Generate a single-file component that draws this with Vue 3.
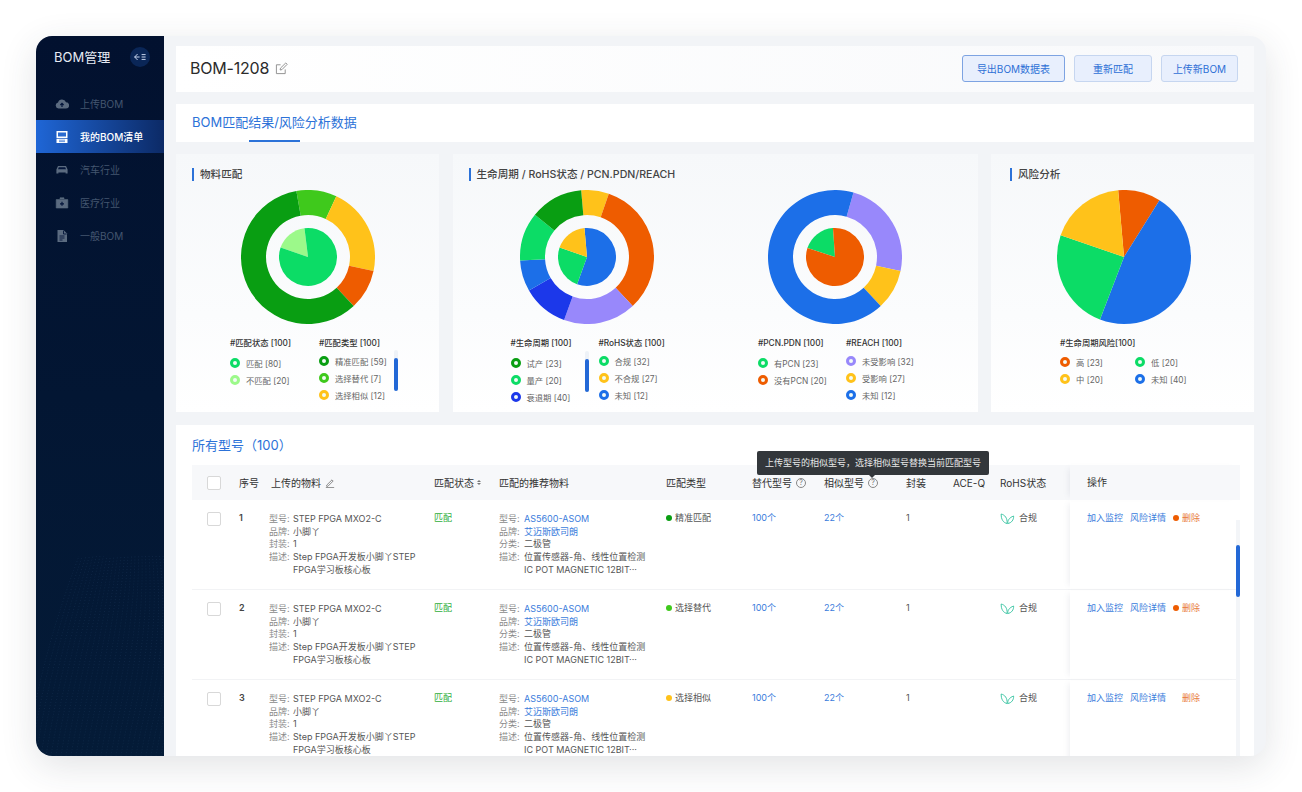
<script setup>
const menu = [
  { name: '上传BOM', icon: 'cloud' },
  { name: '我的BOM清单', icon: 'list', active: true },
  { name: '汽车行业', icon: 'car' },
  { name: '医疗行业', icon: 'kit' },
  { name: '一般BOM', icon: 'doc' }
];

const c = {
  dark: '#099e12',
  lime: '#3fc91c',
  yellow: '#ffc21a',
  orange: '#ee5c00',
  green: '#0cdc66',
  pale: '#9cf98a',
  blue: '#1c6fe8',
  deep: '#1c38ea',
  purple: '#9888fb'
};

// angles run clockwise from 12 o'clock
function slice(r0, r1, a0, a1) {
  const pt = (r, a) => {
    const t = ((a - 90) * Math.PI) / 180;
    return `${(67 + r * Math.cos(t)).toFixed(2)} ${(67 + r * Math.sin(t)).toFixed(2)}`;
  };
  const large = a1 - a0 > 180 ? 1 : 0;
  if (r0 === 0) {
    return `M67 67L${pt(r1, a0)}A${r1} ${r1} 0 ${large} 1 ${pt(r1, a1)}Z`;
  }
  return `M${pt(r1, a0)}A${r1} ${r1} 0 ${large} 1 ${pt(r1, a1)}L${pt(r0, a1)}A${r0} ${r0} 0 ${large} 0 ${pt(r0, a0)}Z`;
}

function ring(r0, r1, start, parts) {
  let from = start;
  return parts.map(([color, to]) => {
    const d = slice(r0, r1, from, to);
    from = to;
    return { color, d };
  });
}

const donut = (outer, inner) => [...ring(42, 67, outer[0], outer[1]), ...ring(0, 29, inner[0], inner[1])];

const panels = [
  {
    title: '物料匹配',
    cls: 'panel-a',
    charts: [
      {
        legend: 'legend-a',
        slices: donut(
          [-10, [[c.lime, 25], [c.yellow, 102], [c.orange, 137], [c.dark, 350]]],
          [-71, [[c.pale, -7], [c.green, 289]]]
        ),
        cols: [
          { head: '#匹配状态 [100]', items: [[c.green, '匹配 [80]'], [c.pale, '不匹配 [20]']] },
          { head: '#匹配类型 [100]', bar: true, items: [[c.dark, '精准匹配 [59]'], [c.lime, '选择替代 [7]'], [c.yellow, '选择相似 [12]']] }
        ]
      }
    ]
  },
  {
    title: '生命周期 / RoHS状态 / PCN.PDN/REACH',
    cls: 'panel-b',
    charts: [
      {
        legend: 'legend-b',
        slices: donut(
          [-5, [[c.yellow, 19], [c.orange, 137], [c.purple, 200], [c.deep, 240], [c.blue, 267], [c.green, 309], [c.dark, 355]]],
          [-5, [[c.blue, 200], [c.green, 289], [c.yellow, 355]]]
        ),
        leftBar: true,
        cols: [
          { head: '#生命周期 [100]', items: [[c.dark, '试产 [23]'], [c.green, '量产 [20]'], [c.deep, '衰退期 [40]']] },
          { head: '#RoHS状态 [100]', items: [[c.green, '合规 [32]'], [c.yellow, '不合规 [27]'], [c.blue, '未知 [12]']] }
        ]
      },
      {
        legend: 'legend-b',
        slices: donut(
          [16, [[c.purple, 102], [c.yellow, 137], [c.blue, 376]]],
          [-72, [[c.green, -4], [c.orange, 288]]]
        ),
        cols: [
          { head: '#PCN.PDN [100]', items: [[c.green, '有PCN [23]'], [c.orange, '没有PCN [20]']] },
          { head: '#REACH [100]', items: [[c.purple, '未受影响 [32]'], [c.yellow, '受影响 [27]'], [c.blue, '未知 [12]']] }
        ]
      }
    ]
  },
  {
    title: '风险分析',
    cls: 'panel-c',
    charts: [
      {
        legend: 'legend-c',
        slices: ring(0, 67, -5, [[c.orange, 32], [c.blue, 201], [c.green, 289], [c.yellow, 355]]),
        head: '#生命周期风险[100]',
        cols: [
          { items: [[c.orange, '高 [23]'], [c.yellow, '中 [20]']] },
          { items: [[c.green, '低 [20]'], [c.blue, '未知 [40]']] }
        ]
      }
    ]
  }
];

const rows = [
  { no: 1, dot: c.dark, type: '精准匹配', risk: true },
  { no: 2, dot: c.lime, type: '选择替代', risk: true },
  { no: 3, dot: c.yellow, type: '选择相似', risk: false }
];

// dotted contour lines at the foot of the sidebar
const waves = Array.from({ length: 30 }, (_, i) => {
  const x = i * 5 - 10;
  return `M${x} 200C${x + 8} 150 ${x * 1.1 + 20} 90 ${x * 0.7 + 50} 0`;
});
</script>

<template>
  <div class="page">
    <div class="window">
      <aside class="side">
        <svg class="waves" viewBox="0 0 128 200" width="128" height="200">
          <path v-for="(w, i) in waves" :key="i" :d="w" />
        </svg>
        <div class="brand">
          <span>BOM管理</span>
          <span class="fold">
            <svg viewBox="0 0 14 14" width="14" height="14" fill="none" stroke="#dce8ff" stroke-width=".9">
              <path d="M4.6 4 1.6 7l3 3M1.6 7h5M8.6 4.6h4M8.6 7h4M8.6 9.4h4" />
            </svg>
          </span>
        </div>
        <nav class="menu">
          <div v-for="m in menu" :key="m.name" class="menu-item" :class="{ active: m.active }">
            <svg viewBox="0 0 14 14" width="14" height="14" class="menu-icon">
              <template v-if="m.icon === 'cloud'">
                <path d="M3.5 11.5a3 3 0 0 1-.5-5.9 4.2 4.2 0 0 1 8-.3 3.1 3.1 0 0 1 0 6.2z" fill="currentColor" />
                <path d="M7 10V6.5M5.4 8 7 6.4 8.6 8" fill="none" stroke="#03153a" stroke-width="1.2" />
              </template>
              <template v-else-if="m.icon === 'list'">
                <path d="M1.5 1h11v7h-11z" fill="currentColor" />
                <path d="M3 2.6h8v3.8H3z" fill="#2a6bd0" />
                <path d="M1.5 8.8h11V13h-11z" fill="#fff" />
                <path d="M4 10.2h6M4 11.6h6" stroke="#2a6bd0" stroke-width=".7" />
              </template>
              <template v-else-if="m.icon === 'car'">
                <path d="M3 3h8l1.6 3.4v4.2h-2V9.6H3.4v1h-2V6.4z" fill="currentColor" />
                <path d="M3.8 4.2h6.4l.8 2H3z" fill="#03153a" />
              </template>
              <template v-else-if="m.icon === 'kit'">
                <path d="M5 3V1.8h4V3M1.2 3.6h11.6v8.4H1.2z" fill="currentColor" stroke="currentColor" stroke-width=".6" />
                <path d="M7 5.8v4M5 7.8h4" stroke="#03153a" stroke-width="1.2" />
              </template>
              <template v-else>
                <path d="M2.5 1h6l3.5 3.5V13H2.5z" fill="currentColor" />
                <path d="M4.5 7h5M4.5 9h5M4.5 11h3M8.5 1.6V5H11.6" fill="none" stroke="#03153a" stroke-width=".9" />
              </template>
            </svg>
            <span>{{ m.name }}</span>
          </div>
        </nav>
      </aside>

      <main class="main">
        <header class="topbar">
          <div class="bom-name">
            <span>BOM-1208</span>
            <svg viewBox="0 0 14 14" width="13" height="13" fill="none" stroke="#8d8d8d" stroke-width="1">
              <path d="M11 8v4.5H1.5V3H6M5.5 8.6l.4-2L11.6 1l1.5 1.5-5.6 5.7z" />
            </svg>
          </div>
          <div class="actions">
            <button class="btn primary">导出BOM数据表</button>
            <button class="btn">重新匹配</button>
            <button class="btn last">上传新BOM</button>
          </div>
        </header>

        <div class="tabs">
          <span>BOM匹配结果/风险分析数据</span>
          <i class="tab-line"></i>
        </div>

        <section class="panels">
          <div v-for="p in panels" :key="p.title" class="panel" :class="p.cls">
            <h3 class="panel-title">{{ p.title }}</h3>
            <div class="chart-row">
              <div v-for="(ch, ci) in p.charts" :key="ci" class="chart-col">
                <svg class="chart" viewBox="0 0 134 134" width="134" height="134">
                  <path v-for="(s, si) in ch.slices" :key="si" :d="s.d" :fill="s.color" />
                </svg>
                <div class="legend" :class="ch.legend">
                  <div v-if="ch.head" class="legend-head wide">{{ ch.head }}</div>
                  <div class="legend-cols">
                    <div v-for="(col, li) in ch.cols" :key="li" class="legend-col">
                      <div v-if="col.head" class="legend-head">{{ col.head }}</div>
                      <div v-for="it in col.items" :key="it[1]" class="legend-item">
                        <i class="ring" :style="{ borderColor: it[0] }"></i>
                        <span>{{ it[1] }}</span>
                      </div>
                      <div v-if="col.bar" class="mini-bar right"><i></i></div>
                    </div>
                  </div>
                  <div v-if="ch.leftBar" class="mini-bar mid"><i></i></div>
                </div>
              </div>
            </div>
          </div>
        </section>

        <section class="table-card">
          <h2 class="table-title">所有型号（100）</h2>
          <div class="tip">上传型号的相似型号，选择相似型号替换当前匹配型号</div>
          <div class="grid head">
            <div class="cell-check"><i class="check"></i></div>
            <div>序号</div>
            <div class="upload-head">
              上传的物料
              <svg viewBox="0 0 12 12" width="10" height="10" fill="none" stroke="#777" stroke-width="1">
                <path d="M2 8.6 8.4 2.2l1.4 1.4L3.4 10H2zM1 11.5h10" />
              </svg>
            </div>
            <div class="sort-head">匹配状态<span class="sort"><i></i><i></i></span></div>
            <div>匹配的推荐物料</div>
            <div>匹配类型</div>
            <div class="with-q">替代型号<span class="q">?</span></div>
            <div class="with-q">相似型号<span class="q">?</span></div>
            <div>封装</div>
            <div>ACE-Q</div>
            <div>RoHS状态</div>
            <div class="ops">操作</div>
          </div>

          <div class="body">
            <div v-for="r in rows" :key="r.no" class="grid row">
              <div class="cell-check"><i class="check"></i></div>
              <div class="no">{{ r.no }}</div>
              <div class="info">
                <div><span class="k">型号:</span><span>STEP FPGA MXO2-C</span></div>
                <div><span class="k">品牌:</span><span>小脚丫</span></div>
                <div><span class="k">封装:</span><span>1</span></div>
                <div><span class="k">描述:</span><span>Step FPGA开发板小脚丫STEP<br />FPGA学习板核心板</span></div>
              </div>
              <div class="matched">匹配</div>
              <div class="info rec">
                <div><span class="k">型号:</span><a>AS5600-ASOM</a></div>
                <div><span class="k">品牌:</span><a>艾迈斯欧司朗</a></div>
                <div><span class="k">分类:</span><span>二极管</span></div>
                <div><span class="k">描述:</span><span>位置传感器-角、线性位置检测<br />IC POT MAGNETIC 12BIT···</span></div>
              </div>
              <div class="type"><i :style="{ background: r.dot }"></i>{{ r.type }}</div>
              <a>100个</a>
              <a>22个</a>
              <div>1</div>
              <div></div>
              <div class="rohs">
                <svg viewBox="0 0 16 14" width="15" height="13" fill="none" stroke="#35c2a0" stroke-width="1">
                  <path d="M7.6 12.4C3.6 11.6 1 8 1.2 2.2 5 3 8 6.4 7.6 12.4zM8.2 12.4C8 9.6 9.8 5.8 14.6 4.4 14.8 8.4 12.4 11.8 8.2 12.4z" />
                </svg>
                合规
              </div>
              <div class="ops op-links">
                <a>加入监控</a>
                <a>风险详情</a>
                <i class="risk" :class="{ off: !r.risk }"></i>
                <span class="del">删除</span>
              </div>
            </div>
            <div class="table-scroll"><i></i></div>
          </div>
        </section>
      </main>
    </div>
  </div>
</template>

<style>
html, body {
  margin: 0;
  background: #fff;
}
</style>

<style scoped>
.page {
  box-sizing: border-box;
  height: 792px;
  padding: 36px;
  overflow: hidden;
  font-family: Inter, "Noto Sans CJK SC", sans-serif;
  color: #333;
}
.window {
  display: flex;
  width: 1230px;
  height: 720px;
  border-radius: 16px;
  overflow: hidden;
  background: #f2f4f7;
  box-shadow: 0 10px 36px rgba(50, 55, 70, 0.14);
}
.side {
  position: relative;
  flex: none;
  width: 128px;
  background: linear-gradient(180deg, #02112f, #041b37);
}
.waves {
  position: absolute;
  left: 0;
  bottom: 0;
}
.waves path {
  fill: none;
  stroke: rgba(90, 130, 180, 0.22);
  stroke-width: 0.6;
  stroke-dasharray: 1 2;
}
.brand {
  display: flex;
  align-items: center;
  justify-content: space-between;
  height: 41px;
  padding: 0 14px 0 18px;
  font-size: 13px;
  color: #e6ebf3;
}
.fold {
  display: flex;
  align-items: center;
  justify-content: center;
  width: 20px;
  height: 20px;
  border-radius: 50%;
  background: #0a2657;
}
.menu {
  margin-top: 10px;
}
.menu-item {
  display: flex;
  align-items: center;
  gap: 11px;
  height: 33px;
  padding-left: 19px;
  font-size: 10px;
  color: #44566f;
}
.menu-icon {
  color: #5b6b80;
}
.menu-item.active {
  background: linear-gradient(90deg, #1f66d6, #0c2a66);
  color: #fff;
  font-weight: 500;
}
.menu-item.active .menu-icon {
  color: #fff;
}

.main {
  flex: 1;
  min-width: 0;
  padding: 10px 12px 0;
  overflow: hidden;
}
.topbar {
  display: flex;
  align-items: center;
  justify-content: space-between;
  height: 46px;
  padding: 0 16px 2px 14px;
  box-sizing: border-box;
  background: linear-gradient(90deg, #fff, #f8f9fb);
}
.bom-name {
  display: flex;
  align-items: center;
  gap: 6px;
  font-size: 16px;
  letter-spacing: -0.2px;
  color: #2b2b2b;
}
.actions {
  display: flex;
  gap: 9px;
}
.btn {
  height: 27px;
  padding: 0;
  width: 78px;
  border: 1px solid #c6d6f0;
  border-radius: 3px;
  background: #e8effd;
  color: #2d6fd6;
  font: 400 10px Inter, "Noto Sans CJK SC", sans-serif;
}
.btn.primary {
  width: 103px;
  border-color: #7da3e2;
}
.btn.last {
  width: 77px;
}
.tabs {
  position: relative;
  height: 38px;
  margin-top: 12px;
  padding-left: 16px;
  line-height: 36px;
  font-size: 13px;
  color: #2c72d8;
  background: #fff;
}
.tab-line {
  position: absolute;
  left: 73px;
  bottom: 0;
  width: 51px;
  height: 2px;
  background: #2c72d8;
}

.panels {
  display: flex;
  justify-content: space-between;
  margin-top: 12px;
  height: 258px;
}
.panel {
  flex: none;
  width: 263px;
  height: 258px;
  background: linear-gradient(180deg, #f6f8fa, #fbfcfd 62%, #fff);
}
.panel-b {
  width: 525px;
}
.panel-title {
  display: flex;
  align-items: center;
  height: 13px;
  margin: 14px 0 0 16px;
  padding-left: 6px;
  border-left: 2px solid #2c72d8;
  font-size: 10.6px;
  font-weight: 500;
  line-height: 13px;
  color: #444;
}
.panel-c .panel-title {
  margin-left: 19px;
}
.chart-row {
  display: flex;
}
.panel-b .chart-row {
  padding-left: 11px;
}
.panel-c .chart-row {
  padding-left: 3px;
}
.chart-col {
  flex: none;
  width: 100%;
}
.panel-b .chart-col {
  width: 247.5px;
}
.panel-c .chart-col {
  width: 260px;
}
.chart {
  display: block;
  margin: 9px auto 0;
}
.legend {
  position: relative;
  margin-top: 12px;
}
.legend-a {
  padding-left: 54px;
}
.legend-b {
  padding-left: 47px;
}
.legend-c {
  padding-left: 66px;
}
.legend-cols {
  display: flex;
}
.legend-a .legend-col:first-child {
  width: 89px;
}
.legend-b .legend-col:first-child {
  width: 88px;
}
.legend-c .legend-col:first-child {
  width: 75px;
}
.legend-col {
  position: relative;
}
.legend-col:nth-child(2) .legend-item {
  position: relative;
  top: -2px;
}
.legend-c .legend-col .legend-item {
  top: 0;
}
.legend-head {
  height: 19px;
  font-size: 8.3px;
  line-height: 14px;
  font-weight: 500;
  color: #333;
  white-space: nowrap;
}
.legend-head.wide {
  height: 18px;
}
.legend-item {
  display: flex;
  align-items: center;
  gap: 6px;
  height: 16.8px;
  font-size: 8.3px;
  color: #666;
  white-space: nowrap;
}
.ring {
  box-sizing: border-box;
  flex: none;
  width: 10px;
  height: 10px;
  border: 3px solid;
  border-radius: 50%;
  background: #f2fbf6;
}
.mini-bar {
  position: absolute;
  width: 4px;
  height: 41px;
  border-radius: 2px;
  background: #eef2f7;
}
.mini-bar i {
  position: absolute;
  left: 0;
  right: 0;
  bottom: 0;
  height: 33px;
  border-radius: 2px;
  background: #2368d6;
}
.mini-bar.right {
  left: 75px;
  top: 14px;
}
.mini-bar.mid {
  left: 121px;
  top: 15px;
}

.table-card {
  position: relative;
  margin-top: 13px;
  height: 331px;
  padding: 0 14px 0 16px;
  background: #fff;
}
.table-title {
  margin: 0;
  padding-top: 12px;
  height: 28px;
  font-size: 13px;
  font-weight: 400;
  line-height: 16px;
  color: #2c72d8;
}
.tip {
  position: absolute;
  left: 581px;
  top: 26px;
  padding: 0 8px;
  height: 24px;
  line-height: 24px;
  font-size: 9px;
  color: #e8e8e8;
  background: #33373b;
  border-radius: 2px;
  white-space: nowrap;
  z-index: 2;
}
.tip::after {
  content: "";
  position: absolute;
  left: 112px;
  top: 24px;
  border: 3px solid transparent;
  border-top-color: #33373b;
}
.grid {
  display: grid;
  grid-template-columns: 47px 30px 165px 65px 167px 86px 72px 82px 47px 47px 70px 1fr;
}
.head {
  height: 35px;
  align-items: center;
  font-size: 10px;
  color: #333;
  background: #f7f8fa;
}
.head > div {
  white-space: nowrap;
}
.cell-check {
  padding-left: 15px;
}
.check {
  display: block;
  box-sizing: border-box;
  width: 14px;
  height: 14px;
  border: 1px solid #d8d8d8;
  border-radius: 2px;
  background: #fff;
}
.upload-head {
  display: flex;
  align-items: center;
  gap: 4px;
  padding-left: 2px;
}
.sort-head {
  display: flex;
  align-items: center;
  gap: 3px;
}
.sort {
  display: flex;
  flex-direction: column;
  gap: 1px;
}
.sort i {
  width: 0;
  height: 0;
  border: 2px solid transparent;
  border-bottom-color: #777;
  border-top-width: 0;
}
.sort i + i {
  border-bottom-width: 0;
  border-top: 2px solid #777;
}
.with-q {
  display: flex;
  align-items: center;
  gap: 4px;
}
.q {
  box-sizing: border-box;
  width: 10px;
  height: 10px;
  border: 1px solid #888;
  border-radius: 50%;
  font-size: 7px;
  line-height: 8px;
  text-align: center;
  color: #777;
}
.ops {
  align-self: stretch;
  padding-left: 17px;
  box-shadow: -5px 0 6px -4px rgba(120, 130, 150, 0.14);
}
.head .ops {
  line-height: 35px;
}
.body {
  position: relative;
  height: 256px;
  overflow: hidden;
}
.row {
  box-sizing: border-box;
  height: 90px;
  padding-top: 12px;
  font-size: 9px;
  line-height: 12.7px;
  color: #555;
  border-bottom: 1px solid #f2f3f5;
}
.row a {
  color: #3a7cdc;
}
.no {
  font-weight: 600;
  color: #444;
}
.info {
  margin-top: 1px;
  font-size: 9px;
  color: #555;
}
.info > div {
  display: flex;
  white-space: nowrap;
}
.k {
  flex: none;
  width: 24px;
  color: #8a8a8a;
}
.rec .k {
  width: 25px;
}
.matched {
  color: #2fae3a;
}
.type {
  display: flex;
  align-items: flex-start;
  gap: 3px;
  height: 13px;
  color: #555;
}
.type i {
  flex: none;
  width: 6px;
  height: 6px;
  margin-top: 3px;
  border-radius: 50%;
}
.rohs {
  display: flex;
  align-items: flex-start;
  gap: 4px;
  white-space: nowrap;
}
.op-links {
  display: flex;
  align-items: flex-start;
  gap: 7px;
  margin-top: -12px;
  padding-top: 12px;
  white-space: nowrap;
}
.risk {
  flex: none;
  width: 6px;
  height: 6px;
  margin-top: 3px;
  border-radius: 50%;
  background: #ee5c00;
}
.risk.off {
  background: transparent;
}
.del {
  margin-left: -4px;
  color: #e8793a;
}
.table-scroll {
  position: absolute;
  right: 0;
  top: 20px;
  width: 4px;
  height: 240px;
  background: #f3f5f8;
}
.table-scroll i {
  position: absolute;
  left: 0;
  top: 25px;
  width: 4px;
  height: 52px;
  border-radius: 2px;
  background: #2368d6;
}
</style>
